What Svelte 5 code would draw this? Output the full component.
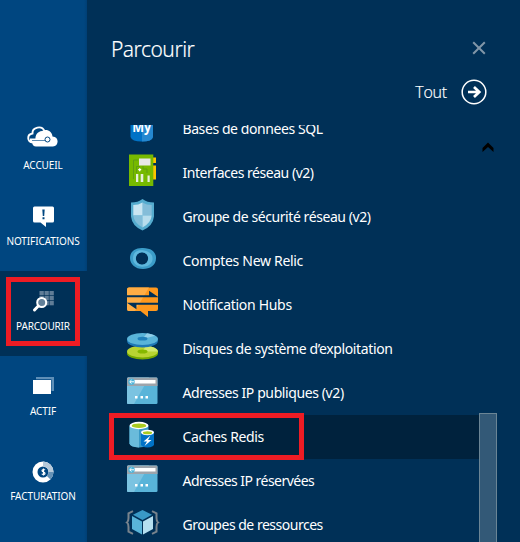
<script>
  const nav = [
    { id: 'home', label: 'ACCUEIL', ls: -0.1 },
    { id: 'bell', label: 'NOTIFICATIONS', ls: -0.1 },
    { id: 'browse', label: 'PARCOURIR', ls: -0.15 },
    { id: 'active', label: 'ACTIF', ls: -0.1 },
    { id: 'billing', label: 'FACTURATION', ls: -0.1 }
  ];
  const items = [
    { icon: 'my', label: 'Bases de données SQL', ls: -0.42 },
    { icon: 'nic', label: 'Interfaces réseau (v2)', ls: -0.47 },
    { icon: 'shield', label: 'Groupe de sécurité réseau (v2)', ls: -0.42 },
    { icon: 'relic', label: 'Comptes New Relic', ls: -0.31 },
    { icon: 'hub', label: 'Notification Hubs', ls: -0.31 },
    { icon: 'disk', label: 'Disques de système d’exploitation', ls: -0.38 },
    { icon: 'ip', label: 'Adresses IP publiques (v2)', ls: -0.4 },
    { icon: 'redis', label: 'Caches Redis', ls: -0.38 },
    { icon: 'ip', label: 'Adresses IP réservées', ls: -0.53 },
    { icon: 'cube', label: 'Groupes de ressources', ls: -0.49 }
  ];
</script>

<div class="app">
  <nav>
    {#each nav as n}
      <div class="item {n.id}">
        <svg width="40" height="34" viewBox="0 0 40 34">
          {#if n.id === 'home'}
            <g transform="translate(2 0)">
              <path d="M11 19.500C5 19 4.500 11.500 10.500 10.500C10 4 20 2 22.500 8" fill="none" stroke="#fff" stroke-width="1.900" />
              <path d="M14 23.500C9.500 23.500 9 17.500 13.500 17C13 12 15.500 8.500 20 8C25 5.500 30 8.500 30.500 13.500C37.500 13.500 37 23.500 31 23.500Z" fill="#fff" />
              <path d="M8 17.500H24" stroke="#fff" stroke-width="4" />
              <path d="M10 17.500H23" stroke="#5c8ab0" stroke-width="1" />
              <circle cx="25.500" cy="16.500" r="2.500" fill="#fff" stroke="#004680" stroke-width="1" />
            </g>
          {:else if n.id === 'bell'}
            <path d="M14.500 7.500H32.500Q34 7.500 34 9V22Q34 23.500 32.500 23.500H26V28L20.500 23.500H14.500Q13 23.500 13 22V9Q13 7.500 14.500 7.500Z" fill="#fff" />
            <path d="M22.300 10.500H24.700L24.200 17H22.800ZM22.500 18.300H24.500V20.300H22.500Z" fill="#004680" />
          {:else if n.id === 'browse'}
            <g fill="#607d97">
              {#each [0, 1, 2] as y}
                {#each [0, 1, 2] as x}
                  <rect x={19.500 + x * 5} y={7 + y * 5} width="4.300" height="4.300" />
                {/each}
              {/each}
            </g>
            <circle cx="21.700" cy="18.500" r="4.500" fill="#628099" stroke="#fff" stroke-width="2" />
            <path d="M18.300 22L14.500 26" stroke="#fff" stroke-width="3" stroke-linecap="round" />
          {:else if n.id === 'active'}
            <path d="M16 8H34V22H31.500V10.300H16Z" fill="#5f8fb7" />
            <rect x="13" y="11" width="18" height="14" fill="#fff" />
          {:else}
            <circle cx="23" cy="18" r="8" fill="none" stroke="#fff" stroke-width="5" />
            <path d="M23 10A8 8 0 0 1 31 18" fill="none" stroke="#b5c9da" stroke-width="5" />
            <path d="M31 18A8 8 0 0 1 28.700 23.700" fill="none" stroke="#6491b6" stroke-width="5" />
            <path d="M25 16Q24.700 15.500 23.500 15.500Q22 15.500 22 16.500Q22 17.500 23.500 18Q25 18.500 25 19.500Q25 20.500 23.500 20.500Q22 20.500 22 19.800M23.500 14.500V21.500" fill="none" stroke="#fff" stroke-width="1.200" />
          {/if}
        </svg>
        <span style="letter-spacing: {n.ls}px">{n.label}</span>
      </div>
    {/each}
  </nav>

  <main>
    <header>
      <h1>Parcourir</h1>
      <svg width="14" height="14" viewBox="0 0 14 14"><path d="M1.200 1.200L12.800 12.800M12.800 1.200L1.200 12.800" stroke="#8196a8" stroke-width="2" /></svg>
    </header>
    <div class="all">
      <span>Tout</span>
      <svg width="26" height="26" viewBox="0 0 26 26">
        <circle cx="13" cy="13" r="11.800" fill="none" stroke="#fff" stroke-width="1.500" />
        <path d="M7 13H18M13 8L18.300 13L13 18" fill="none" stroke="#fff" stroke-width="2.700" />
      </svg>
    </div>
    <div class="list">
      <div class="rows">
        {#each items as it}
          <div class="row" class:selected={it.icon === 'redis'}>
            <svg width="40" height="44" viewBox="0 0 40 44">
              {#if it.icon === 'my'}
                <path d="M8.500 12V30Q10 34.500 19.500 34.500Q30 34.500 31 30V12Z" fill="#0072c6" />
                <path d="M20 12V34.500Q30 34.500 31 30V12Z" fill="#2588d0" />
                <text x="19.700" y="24.500" text-anchor="middle" textLength="19" lengthAdjust="spacingAndGlyphs" class="my">My</text>
              {:else if it.icon === 'nic'}
                <path d="M31 6.500H34V12H31ZM31 14.500H34V28.500H31Z" fill="#fdc500" />
                <rect x="7" y="3.500" width="24.300" height="31.500" fill="#76b900" />
                <path d="M16 9H11.500V28M21 15V18H25V22M14.500 22V15.500H18" fill="none" stroke="#5f9d13" />
                <rect x="17" y="7.500" width="11.500" height="7" fill="#e8e8e8" />
                <path d="M14 23H16.300V31H14ZM18.700 23H21.300V31H18.700ZM25.500 24.500H27.700V31H25.500Z" fill="#e8efdc" />
                <path d="M16.200 18.700H19.200M17.700 17.200V20.200" stroke="#fff" stroke-width="1.300" />
              {:else if it.icon === 'shield'}
                <path d="M20.500 4Q25 7.500 32 7.500V21.500Q31 31 20.500 35.500Q10 31 9 21.500V7.500Q16 7.500 20.500 4Z" fill="#55accf" />
                <path d="M20.500 7.500Q24.500 10 29.700 10V20.500H20.500Z" fill="#84bdd9" />
                <path d="M20.500 7.500Q16.500 10 11.300 10V20.500H20.500Z" fill="#c9e5f2" />
                <path d="M11.300 20.500H20.500V32.500Q12 28 11.300 20.500Z" fill="#82bdd9" />
                <path d="M20.500 20.500H29.700Q29 28 20.500 32.500Z" fill="#b7dded" />
              {:else if it.icon === 'relic'}
                <path fill-rule="evenodd" d="M8 19C8 12 14 8.500 21 9C30 9 34.500 14 34 19.500C34 26 28 30 21 30C13 30 8 25 8 19ZM26.200 19.500A6.200 6.200 0 1 0 13.800 19.500A6.200 6.200 0 1 0 26.200 19.500Z" fill="#3b9dc9" />
                <path fill-rule="evenodd" d="M11 19.500C11 12 17 10.500 22 11.500C28 12.500 31 16 30.500 20.500C30 26 24 28.500 18.500 27.500C14 26.500 11 24 11 19.500ZM26.200 19.500A6.200 6.200 0 1 0 13.800 19.500A6.200 6.200 0 1 0 26.200 19.500Z" fill="#5fb8dd" />
              {:else if it.icon === 'hub'}
                <path d="M7 4.500H34Q36 4.500 36 6.500V26Q36 28 34 28H26V34L18.500 28H7Q5 28 5 26V6.500Q5 4.500 7 4.500Z" fill="#ff981d" />
                <path d="M7 4.500H27L13 28H7Q5 28 5 26V6.500Q5 4.500 7 4.500Z" fill="#ffad45" />
                <path d="M5 13.200H33.500L28 9.500V13M36 20.800H8L13.500 24.500V21" fill="#003057" stroke="#003057" stroke-width="1.900" />
              {:else if it.icon === 'disk'}
                <ellipse cx="20.500" cy="26.500" rx="15.500" ry="6" fill="#77a900" />
                <ellipse cx="20.500" cy="24.500" rx="15.500" ry="6" fill="#b9d432" />
                <path d="M20.500 24.500L24 18.700Q35 20 36 24.500Z" fill="#d2e86e" />
                <ellipse cx="20.500" cy="24.500" rx="5" ry="2" fill="#86b800" />
                <ellipse cx="20.500" cy="14" rx="15.500" ry="6.500" fill="#1e78b5" />
                <ellipse cx="20.500" cy="12" rx="15.500" ry="6" fill="#59b4d9" />
                <path d="M20.500 12L25 6.200Q30 6.900 33 8.700Z" fill="#92cfe9" />
                <ellipse cx="20.500" cy="11.700" rx="5" ry="1.900" fill="#2081bb" />
              {:else if it.icon === 'ip'}
                <rect x="5" y="6.500" width="30.500" height="26.500" rx="1.300" fill="#59b4d9" />
                <path d="M6 6.500H27L12 33H6.300Q5 33 5 32V8Z" fill="#7bc3e1" />
                <path d="M6 6.500H34.500Q35.500 6.500 35.500 8V15H5V8Q5 6.500 6 6.500Z" fill="#9da4ab" />
                <rect x="12" y="9" width="21.500" height="3.500" fill="#fff" />
                <circle cx="9.500" cy="10.800" r="3.200" fill="#4fb5da" />
                <path d="M12 10.800H8M9.500 9L7.700 10.800L9.500 12.600" fill="none" stroke="#fff" />
                <path d="M13 25H15.500V27.500H13ZM18.500 25H21V27.500H18.500ZM23.500 25H26V27.500H23.500Z" fill="#fff" />
              {:else if it.icon === 'redis'}
                <path d="M7.500 11V28.500Q8 32 17 32.500Q26 32 26.500 28.500V11Z" fill="#3999c6" />
                <path d="M7.500 11V28.500Q8 32 17 32.500V11Z" fill="#6abbdb" />
                <ellipse cx="17" cy="10.500" rx="9.500" ry="3.700" fill="#fff" />
                <ellipse cx="17" cy="10.700" rx="7.300" ry="2.300" fill="#a9cb20" />
                <path d="M19 17V29.500Q19.500 32 25.500 32.500Q31.500 32 32 29.500V17Z" fill="#0072c6" />
                <ellipse cx="25.500" cy="17.500" rx="6.500" ry="2.700" fill="#fff" />
                <ellipse cx="25.500" cy="17.700" rx="4.600" ry="1.500" fill="#a9cb20" />
                <path d="M28.500 20.500L21.500 26.500H25L22.500 31L29.500 25H26Z" fill="#fff" />
              {:else}
                <path d="M11 8.200L6.500 10.300V15Q6.500 18.500 5 19.500Q6.500 20.500 6.500 24V28.700L11 30.800M30 8.200L34.500 10.300V15Q34.500 18.500 36 19.500Q34.500 20.500 34.500 24V28.700L30 30.800" fill="none" stroke="#78838d" stroke-width="2" />
                <path d="M20.500 7L30 11.800L20.500 17L11 11.800Z" fill="#3999c6" />
                <path d="M10 13L20 18.500V31.500L10 26Z" fill="#59b4d9" />
                <path d="M31 13L21 18.500V31.500L31 26Z" fill="#b5dff0" />
              {/if}
            </svg>
            <span style="letter-spacing: {it.ls}px">{it.label}</span>
          </div>
        {/each}
      </div>
    </div>
    <svg class="up" width="12" height="11" viewBox="0 0 12 11"><path d="M6 0.500L11.500 6V10L6 5L0.500 10V6Z" fill="#000" /></svg>
    <div class="thumb"></div>
  </main>
  <div class="mark small"></div>
  <div class="mark wide"></div>
</div>

<style>
  :global(body) { margin: 0; background: #003057; }
  .app {
    position: relative; display: flex; width: 520px; height: 542px; overflow: hidden;
    background: #003057; color: #fff; font-family: "Noto Sans", "Open Sans", sans-serif;
  }
  nav { width: 87px; flex: none; padding-top: 110px; box-sizing: border-box; background: linear-gradient(90deg, #004680 84px, #003f75 87px); }
  .item { height: 85px; box-sizing: border-box; padding-top: 13px; display: flex; flex-direction: column; align-items: center; }
  .home { height: 76px; }
  .item svg { display: block; flex: none; margin-right: 7px; }
  .item span { font-size: 10px; line-height: 14px; margin-top: 1px; white-space: nowrap; margin-right: 1px; }
  .browse { background: #003057; }
  main { position: relative; flex: 1; min-width: 0; display: flex; flex-direction: column; }
  header { display: flex; justify-content: space-between; align-items: center; height: 30px; padding: 34px 34px 0 24px; }
  h1 { margin: 0; font: 300 21px/30px "Noto Sans", "Open Sans", sans-serif; letter-spacing: -0.5px; }
  header svg { margin-bottom: 3px; }
  .all { display: flex; align-items: center; justify-content: flex-end; height: 26px; padding: 15px 33px 20px 0; gap: 14px; }
  .all span { font: 300 16px/26px "Open Sans", "Noto Sans", sans-serif; letter-spacing: -0.2px; -webkit-text-stroke: 0.2px #fff; }
  h1 { -webkit-text-stroke: 0.15px #fff; }
  .list { flex: 1; min-height: 0; overflow: hidden; }
  .rows { margin-top: -18px; }
  .row { display: flex; height: 44px; align-items: center; margin-left: 23px; width: 369px; }
  .row svg { margin-left: 12px; flex: none; }
  .row span { margin-left: 20.5px; font-size: 14px; line-height: 20px; white-space: nowrap; }
  .selected { background: #00223d; }
  .my { font: bold 14px "Noto Sans", sans-serif; fill: #fff; }
  .up { position: absolute; left: 395px; top: 142px; }
  .thumb { position: absolute; left: 392px; top: 413px; width: 16px; height: 140px; background: #335977; border: 1px solid #6b8595; }
  .mark { position: absolute; border: 5px solid #ee1c24; box-sizing: border-box; }
  .small { left: 6px; top: 277px; width: 74px; height: 69px; }
  .wide { left: 109px; top: 413px; width: 195px; height: 47px; }
</style>
